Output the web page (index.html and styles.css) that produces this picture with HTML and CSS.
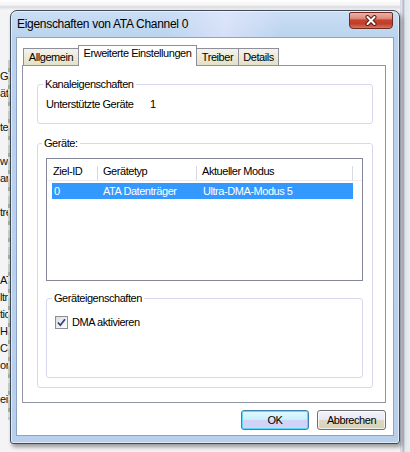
FILE: index.html
```html
<!DOCTYPE html>
<html>
<head>
<meta charset="utf-8">
<link rel="stylesheet" href="styles.css">
</head>
<body>
<div class="desktop">
  <div class="bgwin">
    <div class="bgline">Gast</div>
    <div class="bgline">ätes</div>
    <div class="bgline">&nbsp;</div>
    <div class="bgline">tes</div>
    <div class="bgline">&nbsp;</div>
    <div class="bgline">wert</div>
    <div class="bgline">ares</div>
    <div class="bgline">&nbsp;</div>
    <div class="bgline">tres</div>
    <div class="bgline">&nbsp;</div>
    <div class="bgline">&nbsp;</div>
    <div class="bgline">&nbsp;</div>
    <div class="bgline">ATA</div>
    <div class="bgline">ltra</div>
    <div class="bgline">tion</div>
    <div class="bgline">Host</div>
    <div class="bgline">Con</div>
    <div class="bgline">ort</div>
    <div class="bgline">&nbsp;</div>
    <div class="bgline">eit</div>
  </div>
  <div class="bgbar"></div>

  <div class="dialog">
    <div class="titlebar">
      <span class="title">Eigenschaften von ATA Channel 0</span>
      <div class="close">
        <svg width="14" height="11" viewBox="0 0 14 11">
          <path d="M3.5 2 L10.5 9 M10.5 2 L3.5 9" stroke="#5a1c14" stroke-width="4" stroke-linecap="round" fill="none"/>
          <path d="M3.5 2 L10.5 9 M10.5 2 L3.5 9" stroke="#ffffff" stroke-width="2" stroke-linecap="round" fill="none"/>
        </svg>
      </div>
    </div>
    <div class="client">
      <div class="tabs">
        <div class="tab t-allg">Allgemein</div>
        <div class="tab sel t-erw">Erweiterte Einstellungen</div>
        <div class="tab t-treib">Treiber</div>
        <div class="tab t-det">Details</div>
      </div>
      <div class="panel">
        <div class="grp grp1">
          <div class="legend">Kanaleigenschaften</div>
          <div class="kv"><span class="k">Unterstützte Geräte</span><span>1</span></div>
        </div>
        <div class="grp grp2">
          <div class="legend lg2">Geräte:</div>
          <div class="list">
            <div class="lhead">
              <div class="hc c1">Ziel-ID</div>
              <div class="hc c2">Gerätetyp</div>
              <div class="hc c3">Aktueller Modus</div>
            </div>
            <div class="lrow sel">
              <div class="rc r1">0</div>
              <div class="rc r2">ATA Datenträger</div>
              <div class="rc r3">Ultra-DMA-Modus 5</div>
            </div>
          </div>
          <div class="grp grp3">
            <div class="legend">Geräteigenschaften</div>
            <label class="chk">
              <span class="box">
                <svg width="13" height="13" viewBox="0 0 13 13">
                  <path d="M3 6.5 L5.3 9.2 L10 3.3" stroke="#2c3f7e" stroke-width="1.7" fill="none"/>
                </svg>
              </span>
              <span>DMA aktivieren</span>
            </label>
          </div>
        </div>
      </div>
      <div class="buttons">
        <div class="btn def">OK</div>
        <div class="btn">Abbrechen</div>
      </div>
    </div>
  </div>
</div>
</body>
</html>
```

FILE: styles.css
```css
* { box-sizing: border-box; }
html, body { margin: 0; padding: 0; }
body {
  width: 410px;
  height: 452px;
  overflow: hidden;
  font-family: "Liberation Sans", Arial, sans-serif;
  font-size: 11px;
  letter-spacing: -0.45px;
  color: #000;
}
.desktop {
  position: relative;
  width: 410px;
  height: 452px;
  overflow: hidden;
  background:
    linear-gradient(to right, transparent 0, transparent 400px, #d4d4e4 400px, #e8e8f4 402px, #a9adb2 403px, #c8ccd2 404px, #dfe7ef 405px, #e9eef4 410px),
    linear-gradient(#ffffff 0, #f4f4f6 5px, #dcdce0 7px, #ececf0 9px, #f4f4f6 10px);
}
.bgwin {
  position: absolute;
  left: 0;
  top: 0;
  width: 40px;
  height: 452px;
  padding-top: 68px;
  line-height: 17px;
  white-space: nowrap;
  color: #111;
}
.bgbar {
  position: absolute;
  left: 8px;
  top: 60px;
  width: 2px;
  height: 360px;
  background: repeating-linear-gradient(#c9d0c4 0, #c9d0c4 8px, #a4b09c 8px, #a4b09c 12px, #dfe3dc 12px, #dfe3dc 17px);
}

.dialog {
  position: absolute;
  left: 10px;
  top: 10px;
  width: 390px;
  height: 434px;
  border: 1px solid #3e4956;
  border-radius: 7px 7px 3px 3px;
  background:
    linear-gradient(100deg, rgba(255,255,255,0) 40%, rgba(235,235,255,0.55) 55%, rgba(255,255,255,0) 70%) top / 100% 27px no-repeat,
    linear-gradient(#cadef5, #bad2ed 30px, #b8d0ec);
  box-shadow: 2px 3px 4px rgba(0,0,0,0.38), inset 0 0 0 1px rgba(255,255,255,0.55);
  display: flex;
  flex-direction: column;
}
.titlebar {
  height: 26px;
  display: flex;
  align-items: center;
  padding-left: 6px;
}
.title {
  font-size: 12px;
  letter-spacing: -0.3px;
  color: #000;
}
.close {
  margin-left: auto;
  margin-right: 6px;
  align-self: flex-start;
  margin-top: 1px;
  width: 44px;
  height: 17px;
  border: 1px solid #6e2b22;
  border-radius: 2px 2px 4px 4px;
  background: linear-gradient(#ebb0a4 0%, #df8f80 35%, #c7432f 48%, #bf3e2a 72%, #d77561 100%);
  display: flex;
  align-items: center;
  justify-content: center;
}
.close svg { display: block; }

.client {
  flex: 1;
  margin: 0 5px 7px 5px;
  border: 1px solid #8ea3bf;
  background: #fff;
  padding: 7px 7px 5px 5px;
  display: flex;
  flex-direction: column;
}
.tabs {
  height: 20px;
  display: flex;
  align-items: flex-end;
  padding-left: 1px;
}
.tab {
  height: 17px;
  border: 1px solid #8d8f9e;
  border-bottom: none;
  background: linear-gradient(#f4f3ea, #e4e1c8);
  text-align: center;
  line-height: 13px;
  padding-top: 2px;
  white-space: nowrap;
}
.t-allg { width: 55px; border-right: none; }
.t-erw { width: 119px; }
.t-treib { width: 42px; border-left: none; }
.t-det { width: 40px; border-left: none; }
.tab.sel {
  height: 21px;
  margin-bottom: -1px;
  background: #fff;
  padding-top: 1px;
  position: relative;
  z-index: 1;
}
.panel {
  height: 338px;
  border: 1px solid #8f93a3;
  background: #fff;
  padding: 18px 12px 0 14px;
  display: flex;
  flex-direction: column;
}
.grp {
  border: 1px solid #d6d9ee;
  border-radius: 3px;
  display: flex;
  flex-direction: column;
}
.legend {
  align-self: flex-start;
  margin-top: -7px;
  margin-left: 5px;
  padding: 0 2px;
  line-height: 13px;
  background: #fff;
}
.lg2 { margin-left: 4px; }
.grp1 { height: 40px; }
.kv {
  margin-top: 7px;
  padding-left: 8px;
  line-height: 13px;
  display: flex;
}
.k { width: 104px; }
.grp2 {
  margin-top: 19px;
  height: 245px;
}
.list {
  margin: 8px 9px 0 8px;
  height: 123px;
  border: 1px solid #84879a;
}
.lhead {
  height: 22px;
  border-bottom: 1px solid #eeeef2;
  display: flex;
}
.hc {
  height: 21px;
  padding-top: 6px;
  line-height: 13px;
  background: linear-gradient(#d8d8e2, #d8d8e2) right bottom / 1px 14px no-repeat;
  white-space: nowrap;
}
.c1 { width: 51px; padding-left: 6px; }
.c2 { width: 99px; padding-left: 5px; }
.c3 { width: 156px; padding-left: 5px; }
.lrow {
  margin-top: 2px;
  margin-left: 5px;
  width: 301px;
  height: 16px;
  line-height: 16px;
  display: flex;
  white-space: nowrap;
}
.lrow.sel { background: #3399ff; color: #fff; }
.r1 { width: 46px; padding-left: 2px; }
.r2 { width: 99px; padding-left: 5px; }
.r3 { width: 156px; padding-left: 6px; }
.grp3 {
  margin: 17px 9px 0 8px;
  height: 80px;
}
.chk {
  margin-top: 11px;
  margin-left: 8px;
  display: flex;
  align-items: center;
  gap: 4px;
  line-height: 13px;
}
.box {
  width: 13px;
  height: 13px;
  border: 1px solid #8e8f96;
  background: linear-gradient(135deg, #dcdcdc, #ffffff);
  display: flex;
  align-items: center;
  justify-content: center;
}
.box svg { display: block; margin: -1px; }
.buttons {
  margin-top: 7px;
  display: flex;
  justify-content: flex-end;
  gap: 8px;
}
.btn {
  height: 20px;
  width: 69px;
  border: 1px solid #707070;
  border-radius: 3px;
  background: linear-gradient(#f3f3fb 0%, #e8e8f6 50%, #dcd9c4 51%, #d6d2b8 100%);
  box-shadow: inset 0 0 0 1px rgba(255,255,255,0.7);
  text-align: center;
  line-height: 18px;
}
.btn.def {
  width: 68px;
  border-color: #3c7fb1;
  background: linear-gradient(#e6f8fe 0%, #c6f0fd 50%, #cfd3f6 51%, #d3d5f8 100%);
  box-shadow: inset 0 0 0 1px #5fd8fb;
}
```
